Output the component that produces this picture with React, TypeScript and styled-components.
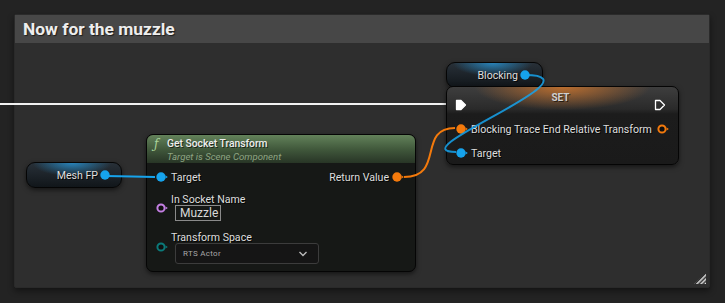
import React from "react"
import styled, { createGlobalStyle } from "styled-components"

const GlobalStyle = createGlobalStyle`
  html, body {
    margin: 0;
    background: #232323;
    font-family: Roboto, "Liberation Sans", sans-serif;
  }
`

const Screen = styled.div`
  width: 725px;
  height: 303px;
  box-sizing: border-box;
  padding: 14px 15px 15px 14px;
  overflow: hidden;
`

const Comment = styled.div`
  height: 100%;
  box-sizing: border-box;
  border: 1px solid #2a2a2a;
  border-radius: 2px;
  background: #2e2e2e;
  box-shadow: 0 3px 6px rgba(0, 0, 0, 0.45);
  display: flex;
  flex-direction: column;
`

const CommentHeader = styled.div`
  height: 28px;
  flex: none;
  background: #474747;
  display: flex;
  align-items: center;
  padding-left: 8px;
  color: #eeeeee;
  font-weight: 700;
  font-size: 17.4px;
  text-shadow: 1px 1px 1px rgba(0, 0, 0, 0.6);
`

const Graph = styled.div`
  flex: 1;
  position: relative;
`

const Wires = styled.svg`
  position: absolute;
  left: 0;
  top: 0;
  overflow: visible;
  pointer-events: none;
`

/* nodes sit on the free graph canvas */
const NodeBox = styled.div<{ $x: number; $y: number; $w: number; $h: number }>`
  position: absolute;
  left: ${p => p.$x}px;
  top: ${p => p.$y}px;
  width: ${p => p.$w}px;
  height: ${p => p.$h}px;
  box-sizing: border-box;
  border-radius: 7px;
  border: 1px solid #050505;
  box-shadow: 0 2px 5px rgba(0, 0, 0, 0.55);
  overflow: hidden;
  display: flex;
  flex-direction: column;
  background: #161816;
`

const SetNode = styled(NodeBox)`
  background:
    radial-gradient(ellipse 38% 30% at 50% 0%, rgba(200, 115, 45, 0.9), rgba(200, 115, 45, 0) 100%),
    linear-gradient(#3e3e3e, #2a2a2a 22px, #1c1c1c 27px, #1a1a1a);
`

const VarNode = styled(NodeBox)<{ $pinGap: number }>`
  border-radius: 9px;
  background:
    radial-gradient(ellipse 42% 55% at 48% 0%, rgba(40, 150, 215, 0.8), rgba(40, 150, 215, 0) 100%),
    linear-gradient(#283038, #11161a);
  flex-direction: row;
  align-items: center;
  justify-content: flex-end;
  padding-right: ${p => p.$pinGap}px;
  gap: 1px;
`

const NodeLabel = styled.span`
  color: #dedede;
  font-size: 10.6px;
  line-height: 11px;
  white-space: nowrap;
  text-shadow: 1px 1px 0 rgba(0, 0, 0, 0.8);
`

const SetTitleRow = styled.div`
  height: 24px;
  flex: none;
  box-sizing: border-box;
  padding: 4px 12px 0 8px;
  display: grid;
  grid-template-columns: 12px 1fr 12px;
`

const SetTitle = styled.span`
  align-self: start;
  text-align: center;
  line-height: 14px;
  color: #cfcfcf;
  font-weight: 700;
  font-size: 10px;
  text-shadow: 1px 1px 0 rgba(0, 0, 0, 0.6);
`

const ExecSlot = styled.div`
  align-self: end;
  display: flex;
`

const FuncHeader = styled.div`
  height: 28px;
  flex: none;
  box-sizing: border-box;
  padding: 2px 0 0 7px;
  background: linear-gradient(#63825a, #41593c 50%, #283526);
  display: grid;
  grid-template-columns: 13px auto;
  grid-template-rows: 13px 12px;
  align-items: center;
`

const FuncIcon = styled.span`
  grid-row: 1;
  color: #a9d39a;
  font-family: "DejaVu Serif", serif;
  font-style: italic;
  font-size: 12px;
`

const FuncTitle = styled.span`
  color: #eeeeee;
  font-size: 10.3px;
  font-weight: 500;
  text-shadow: 1px 1px 0 rgba(0, 0, 0, 0.6);
`

const FuncSub = styled.span`
  grid-column: 2;
  color: #8ea583;
  font-size: 9.6px;
  font-style: italic;
`

const NodeBody = styled.div<{ $pad: string }>`
  flex: 1;
  padding: ${p => p.$pad};
  display: flex;
  flex-direction: column;
`

const PinRow = styled.div<{ $h: number }>`
  height: ${p => p.$h}px;
  flex: none;
  display: flex;
  align-items: center;
  gap: 2px;
`

const Spacer = styled.div`
  flex: 1;
`

const PinGroup = styled.div<{ $top: number; $pinTop: number }>`
  margin-top: ${p => p.$top}px;
  display: flex;
  align-items: flex-start;
  gap: 2px;
  & > svg {
    margin-top: ${p => p.$pinTop}px;
  }
`

const PinStack = styled.div`
  display: flex;
  flex-direction: column;
  gap: 0;
`

const TextBox = styled.div`
  margin: 0 0 0 4px;
  width: 46px;
  height: 16px;
  box-sizing: border-box;
  border: 1px solid #8a8a8a;
  color: #d8d8d8;
  font-size: 12px;
  line-height: 14px;
  padding-left: 4px;
`

const Dropdown = styled.div`
  margin: 0 0 0 4px;
  width: 144px;
  height: 21px;
  box-sizing: border-box;
  border: 1px solid #3c3c3c;
  border-radius: 3px;
  background: #151515;
  display: flex;
  align-items: center;
  padding: 0 10px 0 7px;
  color: #a8a8a8;
  font-size: 8px;
  letter-spacing: 0.3px;
`

const Handle = styled.svg`
  position: absolute;
  right: 3px;
  bottom: 3px;
`

type PinKind = "obj" | "xform" | "name" | "enum"

const pinColor: Record<PinKind, string> = {
  obj: "#16a3ec",
  xform: "#f47a0c",
  name: "#c47fe3",
  enum: "#0b7a7a",
}

const Pin = ({ kind, hollow = false, tail = true }: { kind: PinKind; hollow?: boolean; tail?: boolean }) => {
  const c = pinColor[kind]
  return (
    <svg width={tail ? 14 : 12} height="12" viewBox={tail ? "0 0 14 12" : "0 0 12 12"} style={{ flex: "none" }}>
      {hollow ? (
        <circle cx="6" cy="6" r="3.6" fill="#101010" stroke={c} strokeWidth="2" />
      ) : (
        <circle cx="6" cy="6" r="4.7" fill={c} />
      )}
      {tail && <path d="M10.6 4.6 L12.8 6 L10.6 7.4 Z" fill={c} />}
    </svg>
  )
}

const ExecPin = ({ filled }: { filled: boolean }) => (
  <svg width="12" height="12" viewBox="0 0 12 12" style={{ flex: "none" }}>
    <path
      d="M1.5 1.5 H6 L10.5 6 L6 10.5 H1.5 Z"
      fill={filled ? "#ffffff" : "none"}
      stroke="#ffffff"
      strokeWidth="1.3"
      strokeLinejoin="round"
    />
  </svg>
)

const Chevron = () => (
  <svg width="10" height="6" viewBox="0 0 10 6">
    <path d="M1.5 1 L5 4.5 L8.5 1" fill="none" stroke="#bbbbbb" strokeWidth="1.4" />
  </svg>
)

export default function App() {
  return (
    <>
      <GlobalStyle />
      <Screen>
        <Comment>
          <CommentHeader>Now for the muzzle</CommentHeader>
          <Graph>
            <Wires width="1" height="1">
              <path d="M-20 61 H440" stroke="#f2f2f2" strokeWidth="2" fill="none" />
            </Wires>

            <VarNode $x={431} $y={19} $w={97} $h={26} $pinGap={11}>
              <NodeLabel>Blocking</NodeLabel>
              <Pin kind="obj" tail={false} />
            </VarNode>

            <VarNode $x={11} $y={119} $w={96} $h={26} $pinGap={10}>
              <NodeLabel>Mesh FP</NodeLabel>
              <Pin kind="obj" tail={false} />
            </VarNode>

            <SetNode $x={431} $y={43} $w={233} $h={79}>
              <SetTitleRow>
                <ExecSlot>
                  <ExecPin filled />
                </ExecSlot>
                <SetTitle>SET</SetTitle>
                <ExecSlot>
                  <ExecPin filled={false} />
                </ExecSlot>
              </SetTitleRow>
              <NodeBody $pad="6px 13px 0 8px">
                <PinRow $h={24}>
                  <Pin kind="xform" />
                  <NodeLabel>Blocking Trace End Relative Transform</NodeLabel>
                  <Spacer />
                  <Pin kind="xform" hollow />
                </PinRow>
                <PinRow $h={24}>
                  <Pin kind="obj" />
                  <NodeLabel>Target</NodeLabel>
                </PinRow>
              </NodeBody>
            </SetNode>

            <NodeBox $x={131} $y={91} $w={270} $h={138}>
              <FuncHeader>
                <FuncIcon>ƒ</FuncIcon>
                <FuncTitle>Get Socket Transform</FuncTitle>
                <FuncSub>Target is Scene Component</FuncSub>
              </FuncHeader>
              <NodeBody $pad="6px 10px 0 8px">
                <PinRow $h={16}>
                  <Pin kind="obj" />
                  <NodeLabel>Target</NodeLabel>
                  <Spacer />
                  <NodeLabel>Return Value</NodeLabel>
                  <Pin kind="xform" />
                </PinRow>
                <PinGroup $top={9} $pinTop={8}>
                  <Pin kind="name" hollow />
                  <PinStack>
                    <NodeLabel>In Socket Name</NodeLabel>
                    <TextBox>Muzzle</TextBox>
                  </PinStack>
                </PinGroup>
                <PinGroup $top={11} $pinTop={9}>
                  <Pin kind="enum" hollow />
                  <PinStack>
                    <NodeLabel>Transform Space</NodeLabel>
                    <Dropdown>
                      RTS Actor
                      <Spacer />
                      <Chevron />
                    </Dropdown>
                  </PinStack>
                </PinGroup>
              </NodeBody>
            </NodeBox>

            <Wires width="1" height="1">
              <path d="M90 133 C118 133 116 134 140 134" stroke="#16a3ec" strokeWidth="2" fill="none" />
              <path d="M389 134 C430 134 402 85 440 85" stroke="#f47a0c" strokeWidth="2" fill="none" />
              <path d="M510 32 C590 32 382 109 441 109" stroke="#16a3ec" strokeWidth="2" fill="none" opacity="0.85" />
            </Wires>

            <Handle width="12" height="11" viewBox="0 0 12 11">
              <defs>
                <pattern id="hatch" width="3" height="3" patternUnits="userSpaceOnUse" patternTransform="rotate(45)">
                  <rect width="1.5" height="3" fill="#e0e0e0" />
                </pattern>
              </defs>
              <path d="M12 0 V11 H0 Z" fill="url(#hatch)" />
            </Handle>
          </Graph>
        </Comment>
      </Screen>
    </>
  )
}
